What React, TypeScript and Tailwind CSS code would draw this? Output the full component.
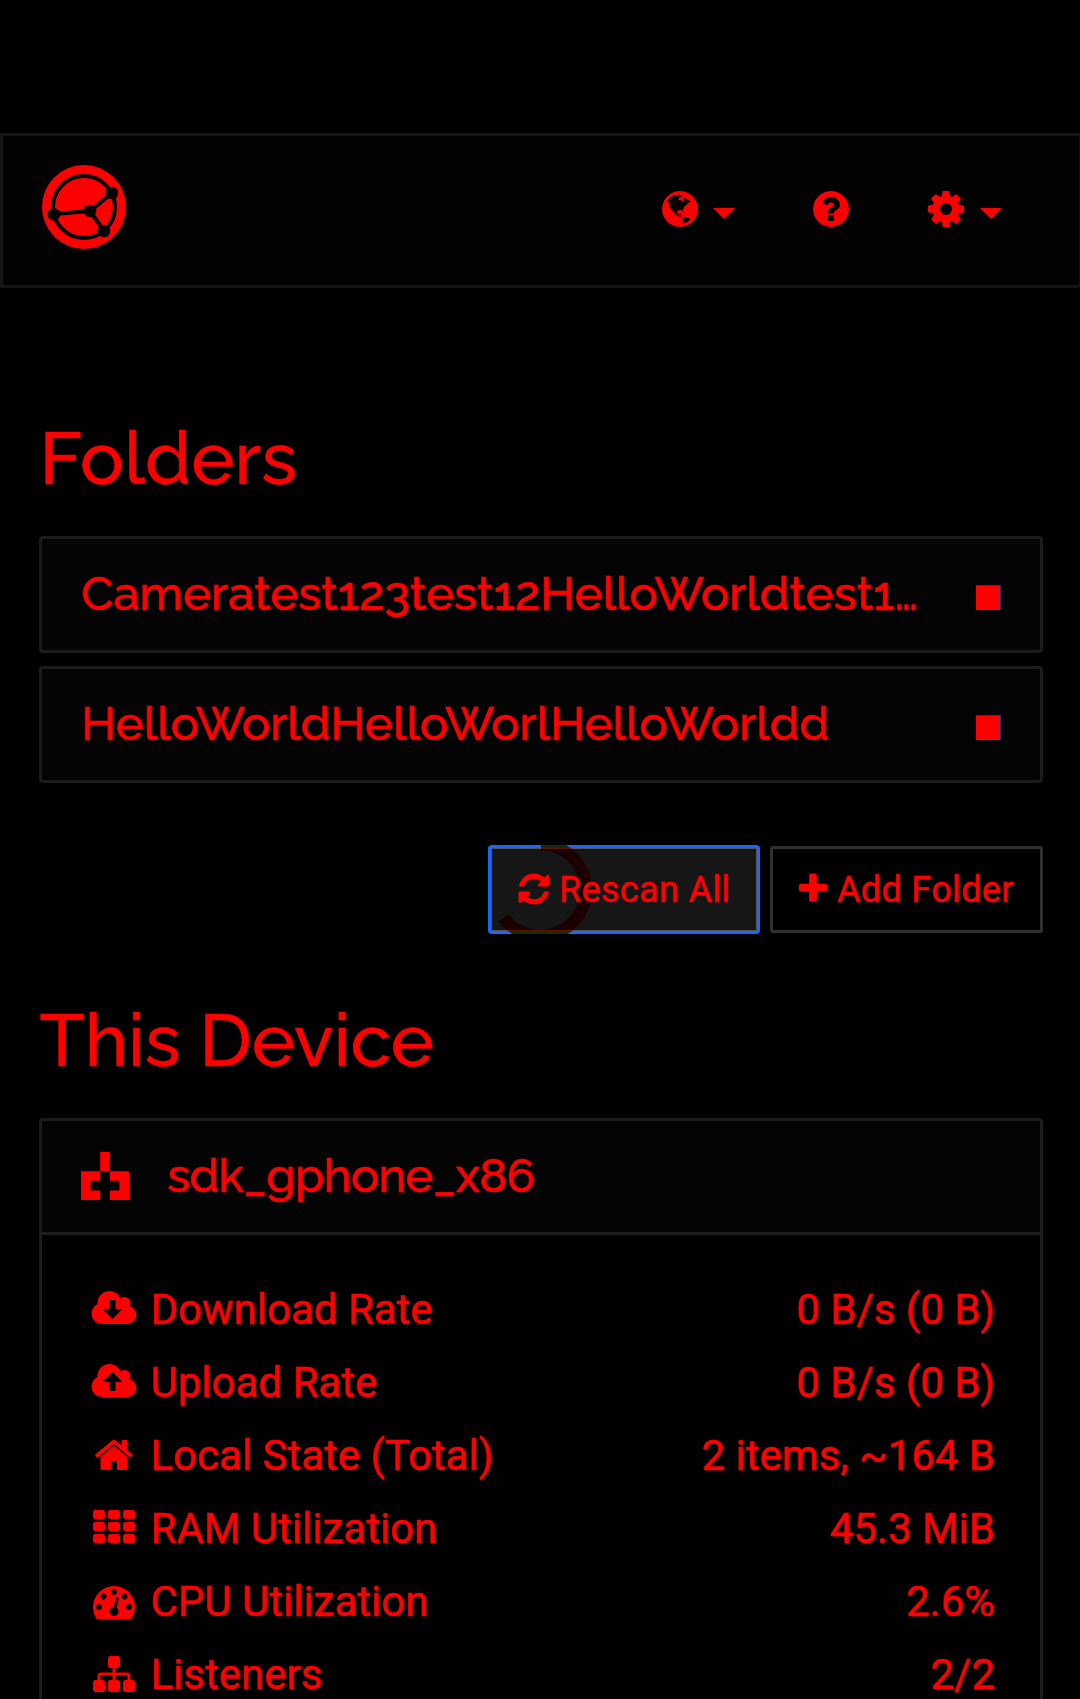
import React from "react";

const CLOUD =
  "zm640 DYq0 159-112.5 271.5t-271.5 112.5h-1088q-185 0-316.5-131.5t-131.5-316.5q0-130 70-240t188-165q-2-30-2-43 0-212 150-362t362-150q156 0 285.5 87t188.5 231q71-62 166-62 106 0 181 75t75 181q0 76-41 138 130 31 213.5 135.5t83.5 238.5z";

const P = {
  globe:
    "M896 128q209 0 385.5 103t279.5 279.5 103 385.5-103 385.5-279.5 279.5-385.5 103-385.5-103-279.5-279.5-103-385.5 103-385.5 279.5-279.5 385.5-103zm274 521q-2 1-9.5 9.5t-13.5 9.5q2 0 4.5-5t5-11 3.5-7q6-7 22-15 14-6 52-12 34-8 51 11-2-2 9.5-13t14.5-12q3-2 15-4.5t15-7.5l2-22q-12 1-17.5-7t-6.5-21q0 2-6 8 0-7-4.5-8t-11.5 1-9 1q-10-3-15-7.5t-8-16.5-4-15q-2-5-9.5-11t-9.5-10q-1-2-2.5-5.5t-3-6.5-4-5.5-5.5-2.5-7 5-7.5 10-4.5 5q-3-2-6-1.5t-4.5 1-4.5 3-5 3.5q-3 2-8.5 3t-8.5 2q15-5-1-11-10-4-16-3 9-4 7.5-12t-8.5-14h5q-1-4-8.5-8.5t-17.5-8.5-13-6q-8-5-34-9.5t-33-.5q-5 6-4.5 10.5t4 14 3.5 12.5q1 6-5.5 13t-6.5 12q0 7 14 15.5t10 21.5q-3 8-16 16t-16 12q-5 8-1.5 18.5t10.5 16.5q2 2 1.5 4t-3.5 4.5-5.5 4-6.5 3.5l-3 2q-11 5-20.5-6t-13.5-26q-7-25-16-30-23-8-29 1-5-13-41-26-25-9-58-4 6-1 0-15-7-15-19-12 3-6 4-17.5t1-13.5q3-13 12-23 1-1 7-8.5t9.5-13.5.5-6q35 4 50-11 5-5 11.5-17t10.5-17q9-6 14-5.5t14.5 5.5 14.5 5q14 1 15.5-11t-7.5-20q12 1 3-17-4-7-8-9-12-4-27 5-8 4 2 8-1-1-9.5 10.5t-16.5 17.5-16-5q-1-1-5.5-13.5t-9.5-13.5q-8 0-16 15 3-8-11-15t-24-8q19-12-8-27-7-4-20.5-5t-19.5 4q-5 7-5.5 11.5t5 8 10.5 5.5 11.5 4 8.5 3q14 10 8 14-2 1-8.5 3.5t-11.5 4.5-6 4q-3 4 0 14t-2 14q-5-5-9-17.5t-7-16.5q7 9-25 6l-10-1q-4 0-16 2t-20.5 1-13.5-8q-4-8 0-20 1-4 4-2-4-3-11-9.5t-10-8.5q-46 15-94 41 6 1 12-1 5-2 13-6.5t10-5.5q34-14 42-7l5-5q14 16 20 25-7-4-30-1-20 6-22 12 7 12 5 18-4-3-11.5-10t-14.5-11-15-5q-16 0-22 1-146 80-235 222 7 7 12 8 4 1 5 9t2.5 11 11.5-3q9 8 3 19 1-1 44 27 19 17 21 21 3 11-10 18-1-2-9-9t-9-4q-3 5 .5 18.5t10.5 12.5q-7 0-9.5 16t-2.5 35.5-1 23.5l2 1q-3 12 5.5 34.5t21.5 19.5q-13 3 20 43 6 8 8 9 3 2 12 7.5t15 10 10 10.5q4 5 10 22.5t14 23.5q-2 6 9.5 20t10.5 23q-1 0-2.5 1t-2.5 1q3 7 15.5 14t15.5 13q1 3 2 10t3 11 8 2q2-20-24-62-15-25-17-29-3-5-5.5-15.5t-4.5-14.5q2 0 6 1.5t8.5 3.5 7.5 4 2 3q-3 7 2 17.5t12 18.5 17 19 12 13q6 6 14 19.5t0 13.5q9 0 20 10t17 20q5 8 8 26t5 24q2 7 8.5 13.5t12.5 9.5l16 8 13 7q5 2 18.5 10.5t21.5 11.5q10 4 16 4t14.5-2.5 13.5-3.5q15-2 29 15t21 21q36 19 55 11-2 1 .5 7.5t8 15.5 9 14.5 5.5 8.5q5 6 18 15t18 15q6-4 7-9-3 8 7 20t18 10q14-3 14-32-31 15-49-18 0-1-2.5-5.5t-4-8.5-2.5-8.5 0-7.5 5-3q9 0 10-3.5t-2-12.5-4-13q-1-8-11-20t-12-15q-5 9-16 8t-16-9q0 1-1.5 5.5t-1.5 6.5q-13 0-15-1 1-3 2.5-17.5t3.5-22.5q1-4 5.5-12t7.5-14.5 4-12.5-4.5-9.5-17.5-2.5q-19 1-26 20-1 3-3 10.5t-5 11.5-9 7q-7 3-24 2t-24-5q-13-8-22.5-29t-9.5-37q0-10 2.5-26.5t3-25-5.5-24.5q3-2 9-9.5t10-10.5q2-1 4.5-1.5t4.5 0 4-1.5 3-6q-1-1-4-3-3-3-4-3 7 3 28.5-1.5t27.5 1.5q15 11 22-2 0-1-2.5-9.5t-.5-13.5q5 27 29 9 3 3 15.5 5t17.5 5q3 2 7 5.5t5.5 4.5 5-.5 8.5-6.5q10 14 12 24 11 40 19 44 7 3 11 2t4.5-9.5 0-14-1.5-12.5l-1-8v-18l-1-8q-15-3-18.5-12t1.5-18.5 15-18.5q1-1 8-3.5t15.5-6.5 12.5-8q21-19 15-35 7 0 11-9-1 0-5-3t-7.5-5-4.5-2q9-5 2-16 5-3 7.5-11t7.5-10q9 12 21 2 8-8 1-16 5-7 20.5-10.5t18.5-9.5q7 2 8-2t1-12 3-12q4-5 15-9t13-5l17-11q3-4 0-4 18 2 31-11 10-11-6-20 3-6-3-9.5t-15-5.5q3-1 11.5-.5t10.5-1.5q15-10-7-16-17-5-43 12zm-163 877q206-36 351-189-3-3-12.5-4.5t-12.5-3.5q-18-7-24-8 1-7-2.5-13t-8-9-12.5-8-11-7q-2-2-7-6t-7-5.5-7.5-4.5-8.5-2-10 1l-3 1q-3 1-5.5 2.5t-5.5 3-4 3 0 2.5q-21-17-36-22-5-1-11-5.5t-10.5-7-10-1.5-11.5 7q-5 5-6 15t-2 13q-7-5 0-17.5t2-18.5q-3-6-10.5-4.5t-12 4.5-11.5 8.5-9 6.5-8.5 5.5-8.5 7.5q-3 4-6 12t-5 11q-2-4-11.5-6.5t-9.5-5.5q2 10 4 35t5 38q7 31-12 48-27 25-29 40-4 22 12 26 0 7-8 20.5t-7 21.5q0 6 2 16z",
  help: "M1024 1376v-192q0-14-9-23t-23-9h-192q-14 0-23 9t-9 23v192q0 14 9 23t23 9h192q14 0 23-9t9-23zm256-672q0-88-55.5-163t-138.5-116-170-41q-243 0-371 213-15 24 8 42l132 100q7 6 19 6 16 0 25-12 53-68 86-92 34-24 86-24 48 0 85.5 26t37.5 59q0 38-20 61t-68 45q-63 28-115.5 86.5t-52.5 125.5v36q0 14 9 23t23 9h192q14 0 23-9t9-23q0-19 21.5-49.5t54.5-49.5q32-18 49-28.5t46-35 44.5-48 28-60.5 12.5-81zm384 192q0 209-103 385.5t-279.5 279.5-385.5 103-385.5-103-279.5-279.5-103-385.5 103-385.5 279.5-279.5 385.5-103 385.5 103 279.5 279.5 103 385.5z",
  cog: "M1152 896q0-106-75-181t-181-75-181 75-75 181 75 181 181 75 181-75 75-181zm512-109v222q0 12-8 23t-20 13l-185 28q-19 54-39 91 35 50 107 138 10 12 10 25t-9 23q-27 37-99 108t-94 71q-12 0-26-9l-138-108q-44 23-91 38-16 136-29 186-7 28-36 28h-222q-14 0-24.5-8.5t-11.5-21.5l-28-184q-49-16-90-37l-141 107q-10 9-25 9-14 0-25-11-126-114-165-168-7-10-7-23 0-12 8-23 15-21 51-66.5t54-70.5q-27-50-41-99l-183-27q-13-2-21-12.5t-8-23.5v-222q0-12 8-23t19-13l186-28q14-46 39-92-40-57-107-138-10-12-10-24 0-10 9-23 26-36 98.5-107.5t94.5-71.5q13 0 26 10l138 107q44-23 91-38 16-136 29-186 7-28 36-28h222q14 0 24.5 8.5t11.5 21.5l28 184q49 16 90 37l142-107q9-9 24-9 13 0 25 10 129 119 165 170 7 8 7 22 0 12-8 23-15 21-51 66.5t-54 70.5q26 50 41 98l183 28q13 2 21 12.5t8 23.5z",
  refresh:
    "M1639 1056q0 5-1 7-64 268-268 434.5t-478 166.5q-146 0-282.5-55t-243.5-157l-129 129q-19 19-45 19t-45-19-19-45v-448q0-26 19-45t45-19h448q26 0 45 19t19 45-19 45l-137 137q71 66 161 102t187 36q134 0 250-65t186-179q11-17 53-117 8-23 30-23h192q13 0 22.5 9.5t9.5 22.5zm25-800v448q0 26-19 45t-45 19h-448q-26 0-45-19t-19-45 19-45l138-138q-148-137-349-137-134 0-250 65t-186 179q-11 17-53 117-8 23-30 23h-199q-13 0-22.5-9.5t-9.5-22.5v-7q65-268 270-434.5t480-166.5q146 0 284 55.5t245 156.5l130-129q19-19 45-19t45 19 19 45z",
  plus: "M1600 736v192q0 40-28 68t-68 28h-416v416q0 40-28 68t-68 28h-192q-40 0-68-28t-28-68v-416h-416q-40 0-68-28t-28-68v-192q0-40 28-68t68-28h416v-416q0-40 28-68t68-28h192q40 0 68 28t28 68v416h416q40 0 68 28t28 68z",
  down:
    "M1216 928q0-14-9-23t-23-9h-224v-352q0-13-9.5-22.5t-22.5-9.5h-192q-13 0-22.5 9.5t-9.5 22.5v352h-224q-13 0-22.5 9.5t-9.5 22.5q0 14 9 23l352 352q9 9 23 9t23-9l351-351q10-12 10-24" +
    CLOUD.replace("DY", "224"),
  up:
    "M1216 864q0-14-9-23l-352-352q-9-9-23-9t-23 9l-351 351q-10 12-10 24 0 14 9 23t23 9h224v352q0 13 9.5 22.5t22.5 9.5h192q13 0 22.5-9.5t9.5-22.5v-352h224q13 0 22.5-9.5t9.5-22.5" +
    CLOUD.replace("DY", "288"),
  home: "M1472 992v480q0 26-19 45t-45 19h-384v-384h-256v384h-384q-26 0-45-19t-19-45v-480q0-1 .5-3t.5-3l575-474 575 474q1 2 1 6zm223-69l-62 74q-8 9-21 11h-3q-13 0-21-7l-692-577-692 577q-12 8-24 7-13-2-21-11l-62-74q-8-10-7-23.5t11-21.5l719-599q32-26 76-26t76 26l244 204v-195q0-14 9-23t23-9h192q14 0 23 9t9 23v408l219 182q10 8 11 21.5t-7 23.5z",
  gauge:
    "M384 1152q0-53-37.5-90.5t-90.5-37.5-90.5 37.5-37.5 90.5 37.5 90.5 90.5 37.5 90.5-37.5 37.5-90.5zm192-448q0-53-37.5-90.5t-90.5-37.5-90.5 37.5-37.5 90.5 37.5 90.5 90.5 37.5 90.5-37.5 37.5-90.5zm428 481l101-382q6-26-7.5-48.5t-38.5-29.5-48 6.5-30 39.5l-101 382q-60 5-107 43.5t-63 98.5q-20 77 20 146t117 89 146-20 89-117q16-60-6-117t-72-91zm660-33q0-53-37.5-90.5t-90.5-37.5-90.5 37.5-37.5 90.5 37.5 90.5 90.5 37.5 90.5-37.5 37.5-90.5zm-640-640q0-53-37.5-90.5t-90.5-37.5-90.5 37.5-37.5 90.5 37.5 90.5 90.5 37.5 90.5-37.5 37.5-90.5zm448 192q0-53-37.5-90.5t-90.5-37.5-90.5 37.5-37.5 90.5 37.5 90.5 90.5 37.5 90.5-37.5 37.5-90.5zm320 448q0 261-141 483-19 29-54 29h-1402q-35 0-54-29-141-221-141-483 0-182 71-348t191-286 286-191 348-71 348 71 286 191 191 286 71 348z",
  sitemap:
    "M1792 1248v320q0 40-28 68t-68 28h-320q-40 0-68-28t-28-68v-320q0-40 28-68t68-28h96v-192h-512v192h96q40 0 68 28t28 68v320q0 40-28 68t-68 28h-320q-40 0-68-28t-28-68v-320q0-40 28-68t68-28h96v-192h-512v192h96q40 0 68 28t28 68v320q0 40-28 68t-68 28h-320q-40 0-68-28t-28-68v-320q0-40 28-68t68-28h96v-192q0-52 38-90t90-38h512v-192h-96q-40 0-68-28t-28-68v-320q0-40 28-68t68-28h320q40 0 68 28t28 68v320q0 40-28 68t-68 28h-96v192h512q52 0 90 38t38 90v192h96q40 0 68 28t28 68z",
};

function Icon({ d, className }: { d: string; className: string }) {
  return (
    <svg viewBox="0 0 1792 1792" fill="currentColor" className={"shrink-0 overflow-visible " + className}>
      <path d={d} />
    </svg>
  );
}

function GridIcon({ className }: { className: string }) {
  return (
    <svg viewBox="0 0 1792 1792" fill="currentColor" className={"shrink-0 " + className}>
      {[128, 640, 1152].map((y) =>
        [0, 640, 1280].map((x) => <rect key={x + "-" + y} x={x} y={y} width="512" height="384" rx="96" />),
      )}
    </svg>
  );
}

function Caret() {
  return (
    <svg viewBox="0 0 22 11" fill="currentColor" className="mt-[8px] h-[11px] w-[22px] shrink-0">
      <path d="M0 0h22L12 10q-1 1-2 0z" />
    </svg>
  );
}

function Logo() {
  return (
    <svg viewBox="0 0 84 84" className="h-[84px] w-[84px] shrink-0">
      <circle cx="42" cy="42" r="42" fill="#f00" />
      <g fill="none" stroke="#020202" strokeWidth="4">
        <circle cx="42" cy="42" r="31" />
        <path d="M12 49L48 46L70 28M48 46L62 66" />
      </g>
      <g fill="#020202">
        <circle cx="11.8" cy="49.2" r="6.3" />
        <circle cx="48" cy="46" r="6.3" />
        <circle cx="70" cy="28" r="6.3" />
        <circle cx="62" cy="66" r="6.3" />
      </g>
    </svg>
  );
}

function Identicon() {
  return (
    <svg viewBox="0 0 50 50" fill="currentColor" className="mb-[1px] h-[48px] w-[48px] shrink-0">
      <path d="M20 0h10v20H20zM0 20h20v10H10v10h10v10H0zM50 20H30v10h10v10H30v10h20z" />
    </svg>
  );
}

function FolderRow({ name }: { name: string }) {
  return (
    <div className="flex h-[117px] items-center rounded-[4px] border-[3px] border-[#1c1c1c] bg-[#040404] pl-[39px] pr-[39px]">
      <div className="mb-[2px] flex-1 whitespace-nowrap font-['Raleway','Lato',sans-serif] text-[47.2px] font-medium leading-[53px] oldstyle-nums">
        {name}
      </div>
      <div className="mt-[5px] h-[25px] w-[25px] border-r border-t border-[#1e3a8a] bg-[#f00]" />
    </div>
  );
}

const FW = "mx-[6px] mb-[1px] h-[42px] w-[42px]";
const rows = [
  { icon: <Icon d={P.down} className={FW} />, label: "Download Rate", value: "0 B/s (0 B)" },
  { icon: <Icon d={P.up} className={FW} />, label: "Upload Rate", value: "0 B/s (0 B)" },
  { icon: <Icon d={P.home} className={FW} />, label: "Local State (Total)", value: "2 items, ~164 B" },
  { icon: <GridIcon className={FW} />, label: "RAM Utilization", value: "45.3 MiB" },
  { icon: <Icon d={P.gauge} className={FW} />, label: "CPU Utilization", value: "2.6%" },
  { icon: <Icon d={P.sitemap} className={FW} />, label: "Listeners", value: "2/2" },
];

export default function App() {
  return (
    <div className="h-[1699px] w-[1080px] overflow-hidden bg-black pt-[133px] font-['Roboto',sans-serif] text-[#f00] [-webkit-text-stroke:0.5px_#f00]">
      <nav className="flex h-[155px] items-start border-y-[3px] border-l-[3px] border-r border-[#141414] bg-[#020202] pl-[39px] pt-[29px]">
        <Logo />
        <div className="ml-[533px] mt-[23px] flex">
          <div className="flex w-[151px] items-center">
            <Icon d={P.globe} className="h-[42px] w-[42px]" />
            <div className="w-[12px]" />
            <Caret />
          </div>
          <div className="flex w-[115px] items-center">
            <Icon d={P.help} className="h-[42px] w-[42px]" />
          </div>
          <div className="flex items-center">
            <Icon d={P.cog} className="h-[42px] w-[42px]" />
            <div className="w-[12.500px]" />
            <Caret />
          </div>
        </div>
      </nav>

      <main className="pl-[39px] pr-[37px]">
        <h3 className="mt-[131px] h-[79px] whitespace-nowrap pl-[0.6px] font-['Raleway','Lato',sans-serif] text-[73.4px] font-medium leading-[79px]">Folders</h3>
        <div className="mt-[38px] flex flex-col gap-[13px]">
          <FolderRow name="Cameratest123test12HelloWorldtest1…" />
          <FolderRow name="HelloWorldHelloWorlHelloWorldd" />
        </div>

        <div className="mt-[63px] flex justify-end gap-[11px]">
          <button className="relative flex h-[87px] w-[270px] items-center rounded-[3px] border-[3px] border-[#555] bg-[#161616] pl-[24px] text-[36px] outline-[3px] -outline-offset-2 outline-[#1868ff]">
            <svg viewBox="488 845 272 89" className="absolute left-[-4px] top-[-4px] h-[89px] w-[272px]" fill="none">
              <clipPath id="face"><rect x="491" y="849" width="266" height="81" /></clipPath>
              <clipPath id="rim"><path d="M488 848h272v1H488zM488 930h272v1H488z" /></clipPath>
              <clipPath id="ring"><path d="M488 845h272v3H488zM488 931h272v3H488z" /></clipPath>
              {[
                ["face", "#1a0000"],
                ["rim", "#5a1400"],
                ["ring", "#1a2a0a"],
              ].map(([id, color]) => (
                <path key={id} d="M541 844A46 46 0 1 1 503.500 918" stroke={color} strokeWidth="12" clipPath={`url(#${id})`} />
              ))}
            </svg>
            <Icon d={P.refresh} className="relative mb-[1px] h-[36px] w-[36px]" />
            <span className="relative ml-[7px] whitespace-nowrap tracking-[0.33px]">Rescan All</span>
          </button>
          <button className="flex h-[87px] w-[273px] items-center rounded-[3px] border-[3px] border-[#303030] bg-black pl-[22px] text-[36px]">
            <Icon d={P.plus} className="mb-[1px] h-[36px] w-[36px]" />
            <span className="ml-[6px] whitespace-nowrap tracking-[0.33px]">Add Folder</span>
          </button>
        </div>

        <h3 className="mt-[68px] h-[79px] whitespace-nowrap pl-[0.6px] font-['Raleway','Lato',sans-serif] text-[73.4px] font-medium leading-[79px]">This Device</h3>
        <section className="mt-[38px] h-[700px] rounded-t-[4px] border-[3px] border-[#1c1c1c]">
          <div className="flex h-[114px] items-center border-b-[3px] border-[#1c1c1c] bg-[#040404] pl-[39px]">
            <Identicon />
            <span className="mb-[2px] ml-[38px] whitespace-nowrap font-['Raleway','Lato',sans-serif] text-[47.2px] font-medium leading-[53px] tracking-[-0.7px] oldstyle-nums">sdk_gphone_x86</span>
          </div>
          <div className="px-[39px] pt-[38px]">
            {rows.map((r) => (
              <div key={r.label} className="flex h-[73px] items-center pl-[5.500px] pr-[6px] text-[42px] leading-[60px] odd:bg-[#010101]">
                {r.icon}
                <span className="ml-[10px] flex-1 whitespace-nowrap">{r.label}</span>
                <span className="whitespace-nowrap">{r.value}</span>
              </div>
            ))}
          </div>
        </section>
      </main>
    </div>
  );
}
